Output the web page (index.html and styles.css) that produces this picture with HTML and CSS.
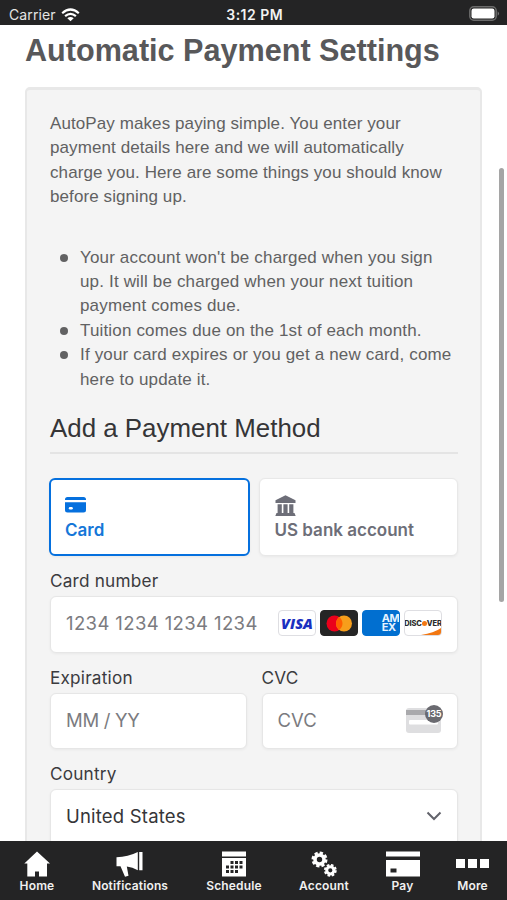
FILE: index.html
```html
<!DOCTYPE html>
<html lang="en">
<head>
<meta charset="utf-8">
<title>Automatic Payment Settings</title>
<link rel="stylesheet" href="styles.css">
</head>
<body>
<header class="status">
  <div class="carrier"><span>Carrier</span>
    <svg class="wifi" viewBox="0 0 19 14" width="19" height="14"><path d="M1.2 5.2Q9.500-2.200 17.800 5.200M4.100 8.100Q9.500 3.500 14.900 8.100" fill="none" stroke="#fff" stroke-width="2.200"/><path d="M9.500 13.300L6.300 10.200Q9.500 7.700 12.700 10.200Z" fill="#fff"/></svg>
  </div>
  <div class="time">3:12 PM</div>
  <svg class="battery" viewBox="0 0 31 15" width="31" height="15"><rect x=".8" y=".8" width="26.400" height="13.400" rx="4" fill="none" stroke="#6b6b6b" stroke-width="1.500"/><rect x="2.500" y="2.500" width="23" height="10" rx="2.200" fill="#fff"/><path d="M28.700 5.200q2.600 2.300 0 4.600z" fill="#777"/></svg>
</header>
<main class="page">
  <h1>Automatic Payment Settings</h1>
  <section class="panel">
    <p class="intro">AutoPay makes paying simple. You enter your<br>payment details here and we will automatically<br>charge you. Here are some things you should know<br>before signing up.</p>
    <ul class="notes">
      <li>Your account won't be charged when you sign<br>up. It will be charged when your next tuition<br>payment comes due.</li>
      <li>Tuition comes due on the 1st of each month.</li>
      <li>If your card expires or you get a new card, come<br>here to update it.</li>
    </ul>
    <h2>Add a Payment Method</h2>
    <div class="methods">
      <div class="method selected">
        <svg viewBox="0 0 22 18" width="22" height="18"><path d="M0 4V3.500Q0 1 2.500 1h16Q21 1 21 3.500V4zM0 6.200h21V14q0 2.500-2.500 2.500h-16Q0 16.500 0 14z" fill="#0570de"/><rect x="3.800" y="11" width="4" height="2.500" rx="1.200" fill="#fff"/></svg>
        <span>Card</span>
      </div>
      <div class="method">
        <svg viewBox="0 0 22 22" width="22" height="22"><path d="M10.500 .3L20.500 5.300V8H.500V5.300ZM2.600 9.300h4.200v9H2.600zM8.400 9.300h4.200v9H8.400zM14.200 9.300h4.200v9h-4.200zM1.500 18h18l1.200 3H.300z" fill="#6d6e78"/></svg>
        <span>US bank account</span>
      </div>
    </div>
    <div class="field">
      <label>Card number</label>
      <div class="input"><span class="placeholder number">1234 1234 1234 1234</span>
        <div class="brands">
          <span class="brand visa">VISA</span>
          <span class="brand mastercard"><svg viewBox="0 0 38 25" width="38" height="25"><circle cx="14.500" cy="12.500" r="8" fill="#eb001b"/><circle cx="24" cy="12.500" r="8" fill="#f79e1b"/><path d="M19.250 6.060a8 8 0 0 1 0 12.880a8 8 0 0 1 0-12.880z" fill="#ff5f00"/></svg></span>
          <span class="brand amex">AM EX</span>
          <span class="brand discover"><span>DISC<i></i>VER</span><svg viewBox="0 0 20 7" width="20" height="7"><path d="M0 7Q13 5 20 0V7Z" fill="#f27712"/></svg></span>
        </div>
      </div>
    </div>
    <div class="pair">
      <div class="field"><label>Expiration</label><div class="input"><span class="placeholder expiry">MM / YY</span></div></div>
      <div class="field"><label>CVC</label><div class="input"><span class="placeholder">CVC</span>
        <div class="cvc"><svg viewBox="0 0 38 28" width="38" height="28"><rect x="0" y="3" width="35" height="25" rx="3" fill="#dedee0"/><rect y="5" width="35" height="5" fill="#a9a9ac"/><rect x="3" y="15" width="29" height="4.500" rx="1" fill="#fff"/><circle cx="28" cy="9" r="9" fill="#6a6a70"/></svg><span>135</span></div></div></div>
    </div>
    <div class="field">
      <label>Country</label>
      <div class="input"><span class="country">United States</span>
        <svg class="chevron" viewBox="0 0 16 10" width="16" height="10"><path d="M1.500 1.500L8 8l6.500-6.500" fill="none" stroke="#62636b" stroke-width="2"/></svg></div>
    </div>
  </section>
  <div class="scrollbar"></div>
</main>
<nav class="tabs">
  <div class="tab home"><svg viewBox="0 0 26 26" width="26" height="26"><path d="M13 .500L26 12.500h-3V25.500h-8v-5h-4v5H3.300v-13H.300Z" fill="#fff"/></svg><span>Home</span></div>
  <div class="tab notifications"><svg viewBox="0 0 28 26" width="28" height="26"><path d="M.500 6.200Q12 6 21.800 1v18.200Q16.500 16.300 10.800 15.500L12.500 24.800 9 25.800 4.500 15.300H.500ZM23.200 1H26.500V19.200H23.200Z" fill="#fff"/></svg><span>Notifications</span></div>
  <div class="tab schedule"><svg viewBox="0 0 24 26" width="24" height="26"><path d="M0 .500h24v5H0zM0 7h24v18.500H0z" fill="#fff"/><path d="M8.500 10h3v3h-3zM13 10h3v3h-3zM17.500 10h3v3h-3zM4 14.500h3v3H4zM8.500 14.500h3v3h-3zM13 14.500h3v3h-3zM17.500 14.500h3v3h-3zM4 19h3v3H4zM8.500 19h3v3h-3zM13 19h3v3h-3z" fill="#242425"/></svg><span>Schedule</span></div>
  <div class="tab account"><svg viewBox="0 0 26 26" width="26" height="26"><g fill="none" stroke="#fff"><circle cx="8.500" cy="8.500" r="4.500" stroke-width="3.600"/><circle cx="8.500" cy="8.500" r="6.800" stroke-width="2.400" stroke-dasharray="3.300 2.040"/><circle cx="19.300" cy="19.300" r="3.600" stroke-width="3"/><circle cx="19.300" cy="19.300" r="5.500" stroke-width="1.900" stroke-dasharray="2.600 1.720"/></g></svg><span>Account</span></div>
  <div class="tab pay"><svg viewBox="0 0 34 26" width="34" height="26"><path d="M0 .500h34v5H0zM0 9h34v16.500H0z" fill="#fff"/><path d="M4.500 17.500h6v4h-6z" fill="#242425"/></svg><span>Pay</span></div>
  <div class="tab more"><svg viewBox="0 0 33 26" width="33" height="26"><path d="M0 8h9v9H0zM12 8h9v9h-9zM24 8h9v9h-9z" fill="#fff"/></svg><span>More</span></div>
</nav>
</body>
</html>
```
FILE: styles.css
```css
* { box-sizing: border-box; }
body {
  margin: 0;
  width: 507px;
  height: 900px;
  overflow: hidden;
  display: flex;
  flex-direction: column;
  background: #fff;
  font-family: Inter, "Liberation Sans", sans-serif;
}
svg { display: block; flex: none; }

.status {
  flex: none;
  height: 25px;
  padding: 0 7px 0 9px;
  display: grid;
  grid-template-columns: 1fr auto 1fr;
  align-items: center;
  background: #242425;
  color: #fff;
  font-size: 14px;
  line-height: 25px;
}
.carrier { display: flex; align-items: center; gap: 5px; padding-top: 2px; color: #e4e4e4; }
.carrier span { letter-spacing: .1px; }
.time { padding-top: 2px; font-weight: 600; color: #f2f2f2; letter-spacing: .5px; margin-right: -.5px; }
.battery { justify-self: end; }

.page {
  position: relative;
  flex: 1;
  min-height: 0;
  overflow: hidden;
  padding: 7px 25px 0;
}
h1 {
  margin: 0 0 18px;
  font: bold 30.6px/37px "Liberation Sans", Arial, sans-serif;
  color: #58585a;
  white-space: nowrap;
}
.panel {
  height: 800px;
  padding: 22px 22px 0 23px;
  border: 2px solid #e8e8e8;
  border-top-width: 3px;
  border-radius: 5px;
  background: #f4f4f4;
}
.intro, .notes {
  font: 17px/24.4px "Liberation Sans", Arial, sans-serif;
  color: #616162;
  white-space: nowrap;
}
.intro { margin: 0 0 36px; letter-spacing: .09px; }
.notes { margin: 0; padding-left: 30px; list-style: none; letter-spacing: .16px; }
.notes li { position: relative; }
.notes li::before {
  content: "";
  position: absolute;
  left: -20px;
  top: 8px;
  width: 8px;
  height: 8px;
  border-radius: 50%;
  background: #616162;
}
h2 {
  margin: 17px 0 24px;
  height: 45px;
  border-bottom: 2px solid #e4e4e4;
  font: 25.9px/38px "Liberation Sans", Arial, sans-serif;
  color: #353537;
}
.methods { display: flex; gap: 9px; margin: 0 0 14px -1px; }
.method {
  flex: 1;
  height: 78px;
  padding: 16px 15px 0;
  display: flex;
  flex-direction: column;
  border: 1px solid #e8e8e8;
  border-radius: 6px;
  background: #fff;
  box-shadow: 0 1px 3px rgba(0, 0, 0, .05);
  color: #6d6e78;
  font-size: 17px;
  font-weight: 600;
  line-height: 24px;
}
.method svg { margin-bottom: 1px; }
.method.selected { padding-left: 14px; border: 2px solid #0570de; color: #1577d8; }
.method.selected svg { margin-bottom: 4px; }

.field { display: flex; flex-direction: column; margin-bottom: 14px; }
.field label { font-size: 17.2px; line-height: 22px; margin-bottom: 4px; color: #3b3b3e; letter-spacing: .2px; }
.input {
  height: 56.500px;
  padding: 0 14px 2px 15px;
  display: flex;
  align-items: center;
  justify-content: space-between;
  border: 1px solid #e6e6e6;
  border-radius: 6px;
  background: #fff;
  box-shadow: 0 1px 3px rgba(0, 0, 0, .05);
  font-size: 18.5px;
  white-space: nowrap;
}
.placeholder { color: #7b7b80; }
.number { letter-spacing: .39px; }
.expiry { letter-spacing: -.3px; }
.country { color: #353538; letter-spacing: .2px; }
.pair { display: grid; grid-template-columns: 1fr 1fr; gap: 15px; }

.brands { display: flex; gap: 4px; margin-right: 1px; }
.brand {
  width: 38px;
  height: 26px;
  border: 1px solid #dedee2;
  border-radius: 4px;
  display: flex;
  align-items: center;
  justify-content: center;
  overflow: hidden;
}
.visa { font: italic 800 14.500px "Open Sans", sans-serif; color: #1a2fc0; letter-spacing: 0; }
.mastercard { background: #252525; border-color: #252525; }
.amex {
  padding-left: 19px;
  white-space: normal;
  border-color: #016fd0;
  background: #016fd0;
  color: #e5f3ff;
  font-size: 11px;
  font-weight: 700;
  line-height: 9px;
  letter-spacing: -.4px;
}
.discover { position: relative; font-size: 7.500px; font-weight: 800; color: #2b2b2b; letter-spacing: -.1px; }
.discover span { display: flex; align-items: center; }
.discover i { width: 5px; height: 5px; border-radius: 50%; background: #f27712; }
.discover svg { position: absolute; right: 0; bottom: 0; }
.cvc { position: relative; margin-top: -1px; margin-right: -1px; }
.cvc span {
  position: absolute;
  left: 19px;
  top: 0;
  width: 18px;
  text-align: center;
  color: #fff;
  font-size: 9px;
  font-weight: 700;
  line-height: 18px;
  letter-spacing: -.2px;
}
.chevron { margin-right: 1px; }
.scrollbar {
  position: absolute;
  right: 3px;
  top: 143px;
  width: 5px;
  height: 434px;
  border-radius: 3px;
  background: #a5a5a5;
}

.tabs {
  flex: none;
  height: 59px;
  padding-top: 10px;
  display: flex;
  background: #242425;
  color: #f0f0f0;
  font-size: 12px;
  font-weight: 600;
  line-height: 17px;
}
.tab { display: flex; flex-direction: column; align-items: center; letter-spacing: .15px; }
.home { width: 74px; }
.notifications { width: 112px; }
.schedule { width: 96px; }
.account { width: 84px; }
.pay { width: 73px; }
.more { width: 67px; }
```
